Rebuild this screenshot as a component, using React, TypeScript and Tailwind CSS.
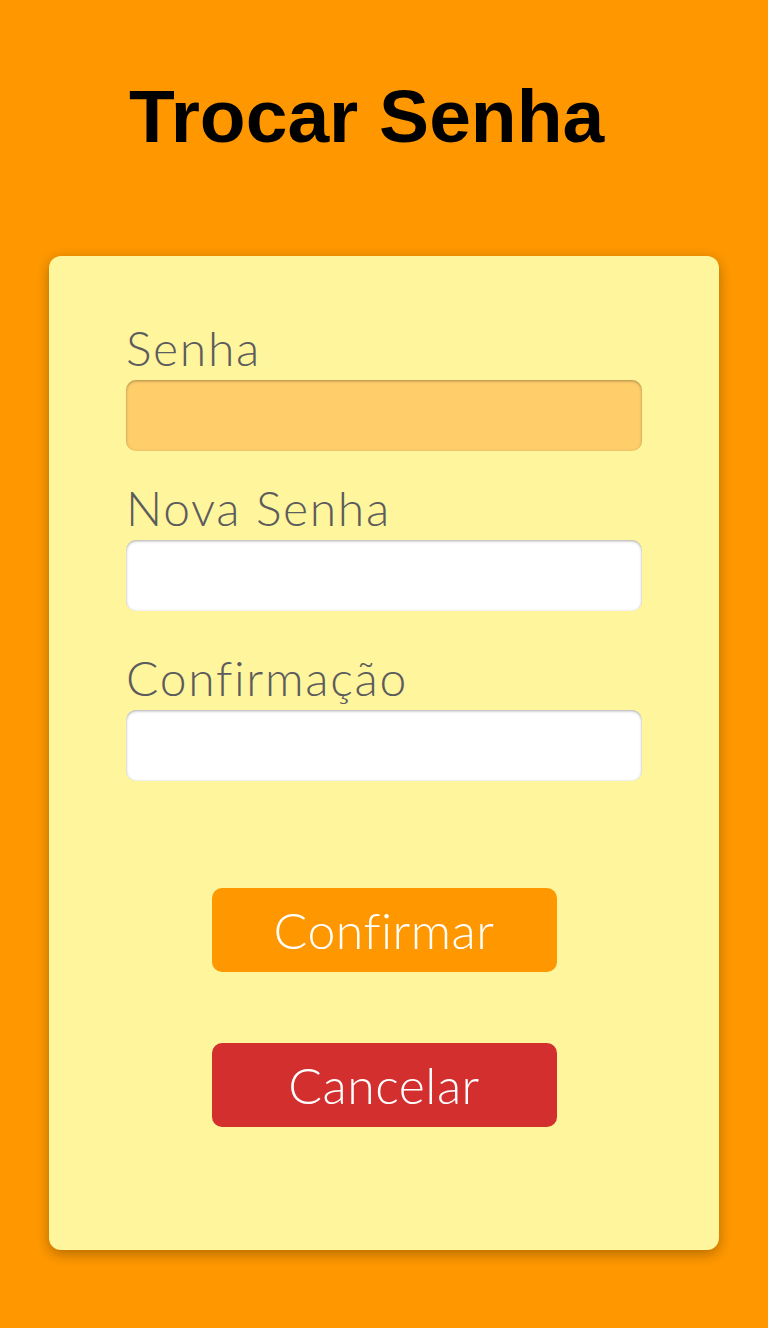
import React, { useState } from 'react';

const Field: React.FC<{
  label: string;
  value: string;
  onChange: (v: string) => void;
  highlight?: boolean;
  className?: string;
}> = ({ label, value, onChange, highlight, className }) => (
  <label className={`flex flex-col ${className ?? ''}`}>
    <span className="text-[48px] font-light leading-none tracking-[0.035em] text-[#5c5c5c]">{label}</span>
    <input
      type="password"
      value={value}
      onChange={(e) => onChange(e.target.value)}
      className={`mt-[8px] h-[71px] w-full rounded-[10px] px-4 text-[28px] outline-none shadow-[inset_0_1px_3px_rgba(0,0,0,0.35)] ${
        highlight ? 'bg-[#ffce6b]' : 'bg-white'
      }`}
    />
  </label>
);

export default function App() {
  const [senha, setSenha] = useState('');
  const [nova, setNova] = useState('');
  const [confirmacao, setConfirmacao] = useState('');

  return (
    <div className="flex min-h-[1328px] flex-col bg-[#ff9800] font-['Lato','Open_Sans',sans-serif]">
      <h1 className="pl-[129px] pt-[79px] font-['Liberation_Sans',Arial,sans-serif] text-[75px] font-bold leading-none text-black">
        Trocar Senha
      </h1>

      <div className="mx-[49px] mt-[102px] flex h-[994px] flex-col rounded-[12px] bg-[#fff59d] px-[77px] pt-[68px] shadow-[0_4px_14px_rgba(0,0,0,0.3)]">
        <Field label="Senha" value={senha} onChange={setSenha} highlight />
        <Field label="Nova Senha" value={nova} onChange={setNova} className="mt-[33px]" />
        <Field label="Confirmação" value={confirmacao} onChange={setConfirmacao} className="mt-[43px]" />

        <div className="mt-[107px] flex flex-col items-center gap-[71px]">
          <button className="h-[84px] w-[345px] rounded-[10px] bg-[#ff9800] text-[50px] font-light tracking-[0.01em] text-white">
            Confirmar
          </button>
          <button className="h-[84px] w-[345px] rounded-[10px] bg-[#d32f2f] text-[50px] font-light tracking-[0.01em] text-white">
            Cancelar
          </button>
        </div>
      </div>
    </div>
  );
}
